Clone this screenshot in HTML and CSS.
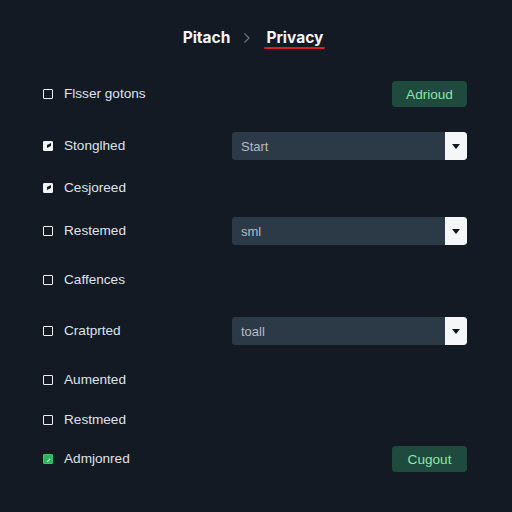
FILE: index.html
```html
<!DOCTYPE html>
<html>
<head>
<meta charset="utf-8">
<link rel="stylesheet" href="styles.css">
</head>
<body>
<div class="page">
  <header class="crumbs">
    <span class="crumb">Pitach</span>
    <svg class="sep" width="8" height="12" viewBox="0 0 8 12"><path d="M1.5 1.5 L6 6 L1.5 10.5" fill="none" stroke="#6b7480" stroke-width="1.2"/></svg>
    <span class="crumb current">Privacy</span>
  </header>
  <div class="list">
    <div class="row r1">
      <label class="item"><span class="box"></span><span class="label">Flsser gotons</span></label>
      <button class="btn">Adrioud</button>
    </div>
    <div class="row r2">
      <label class="item"><span class="box on"></span><span class="label">Stonglhed</span></label>
      <div class="select"><span class="val">Start</span><span class="arrow"></span></div>
    </div>
    <div class="row r3">
      <label class="item"><span class="box on"></span><span class="label">Cesjoreed</span></label>
    </div>
    <div class="row r4">
      <label class="item"><span class="box"></span><span class="label">Restemed</span></label>
      <div class="select"><span class="val">sml</span><span class="arrow"></span></div>
    </div>
    <div class="row r5">
      <label class="item"><span class="box"></span><span class="label">Caffences</span></label>
    </div>
    <div class="row r6">
      <label class="item"><span class="box"></span><span class="label">Cratprted</span></label>
      <div class="select"><span class="val">toall</span><span class="arrow"></span></div>
    </div>
    <div class="row r7">
      <label class="item"><span class="box"></span><span class="label">Aumented</span></label>
    </div>
    <div class="row r8">
      <label class="item"><span class="box"></span><span class="label">Restmeed</span></label>
    </div>
    <div class="row r9">
      <label class="item"><span class="box green"></span><span class="label">Admjonred</span></label>
      <button class="btn">Cugout</button>
    </div>
  </div>
</div>
</body>
</html>
```

FILE: styles.css
```css
* { box-sizing: border-box; }
html, body { margin: 0; padding: 0; }
body {
  width: 512px;
  height: 512px;
  background: #131a24;
  font-family: "Liberation Sans", Arial, sans-serif;
  color: #dfe3e8;
  overflow: hidden;
}
.page { padding: 0 45px 0 43px; }
.crumbs {
  height: 76px;
  padding-top: 28px;
  display: flex;
  justify-content: center;
  align-items: flex-start;
  gap: 11px;
  padding-right: 4px;
  font-family: Inter, "Liberation Sans", sans-serif;
  font-weight: 700;
  font-size: 15.5px;
  color: #f2f4f7;
}
.sep { margin-top: 4px; margin-left: 2px; margin-right: 4px; }
.crumb { line-height: 20px; }
.current {
  position: relative;
}
.current::after {
  content: "";
  position: absolute;
  left: -2px;
  right: -2px;
  top: 19px;
  height: 2px;
  border-radius: 1px;
  background: #d81f2a;
}
.list { display: flex; flex-direction: column; padding-top: 4px; }
.row {
  height: 28px;
  display: flex;
  align-items: center;
  justify-content: space-between;
}
.r2 { margin-top: 24px; }
.r3 { margin-top: 14px; }
.r4 { margin-top: 15px; }
.r5 { margin-top: 21px; }
.r6 { margin-top: 23px; }
.r7 { margin-top: 21px; }
.r8 { margin-top: 12px; }
.r9 { margin-top: 11px; }
.item { display: flex; align-items: center; gap: 11px; font-size: 13.6px; }
.label { line-height: 16px; }
.box {
  width: 10px;
  height: 10px;
  border: 1.5px solid #eef1f4;
  border-radius: 1px;
  position: relative;
}
.box.on { background: #f2f4f7; }
.box.on::after {
  content: "";
  position: absolute;
  left: 3px; top: 2px;
  width: 4px; height: 3px;
  background: #131a24;
  transform: skewY(-25deg);
}
.box.green { background: #2fb35a; border-color: #3cc46a; }
.box.green::after {
  content: "";
  position: absolute;
  left: 2px; top: 3px;
  width: 4px; height: 2px;
  border-bottom: 1.5px solid #e8ffe8;
  transform: rotate(-45deg);
}
.btn {
  width: 75px;
  height: 26px;
  border: none;
  border-radius: 4px;
  background: #1f4a3e;
  color: #8fe3aa;
  font-family: "Liberation Sans", Arial, sans-serif;
  font-size: 13.6px;
  padding: 0;
}
.select {
  width: 235px;
  height: 28px;
  border-radius: 3px;
  background: #2c3a47;
  display: flex;
  align-items: center;
  justify-content: space-between;
  overflow: hidden;
}
.val { padding-left: 9px; font-size: 13px; color: #b3bcc6; }
.arrow {
  width: 22px;
  height: 28px;
  background: #f4f6f8;
  border-radius: 0 3px 3px 0;
  position: relative;
}
.arrow::after {
  content: "";
  position: absolute;
  left: 7px; top: 12px;
  border-left: 4px solid transparent;
  border-right: 4px solid transparent;
  border-top: 5px solid #10151c;
}
```
